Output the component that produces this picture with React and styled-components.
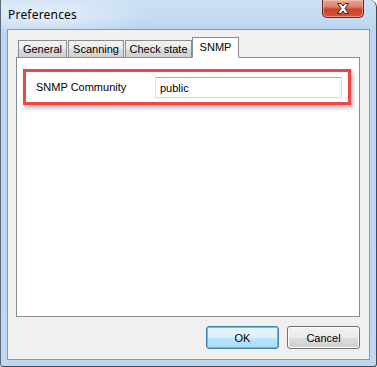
import React from "react";
import styled, { createGlobalStyle } from "styled-components";

const Global = createGlobalStyle`
  html, body { margin: 0; padding: 0; background: #fff; }
  body { font-family: "Liberation Sans", Arial, sans-serif; font-size: 11px; color: #000; }
`;

const Window = styled.div`
  position: relative;
  width: 377px;
  height: 367px;
  box-sizing: border-box;
  display: flex;
  flex-direction: column;
  background: linear-gradient(180deg, #cde1f5 0px, #bdd6f0 28px, #bfd8f2 100%);
  border-left: 1px solid #5d6b78;
  border-right: 1px solid #3d4a58;
  border-bottom: 1px solid #3d4a58;
  border-top-right-radius: 7px;
  border-bottom-left-radius: 3px;
  border-bottom-right-radius: 3px;
  overflow: hidden;
`;

const TitleBar = styled.div`
  height: 29px;
  flex: none;
  display: flex;
  align-items: flex-start;
  justify-content: space-between;
  padding-left: 7px;
  padding-right: 12px;
  box-sizing: border-box;
  background: radial-gradient(ellipse 110px 22px at 40px 15px, rgba(255,255,255,0.6), rgba(255,255,255,0) 100%);
`;

const Title = styled.span`
  font-family: "Noto Sans", "Open Sans", sans-serif;
  font-size: 12px;
  letter-spacing: 0.2px;
  line-height: 14px;
  padding-top: 8px;
  color: #000;
`;

const CloseButton = styled.div`
  width: 42px;
  height: 18px;
  box-sizing: border-box;
  border: 1px solid #6a2419;
  border-top: none;
  border-radius: 0 0 5px 5px;
  background: linear-gradient(180deg, #e9a795 0%, #dc7f68 40%, #c8452b 55%, #d4583c 100%);
  box-shadow: inset 0 0 0 1px rgba(255, 220, 210, 0.45);
  display: flex;
  align-items: center;
  justify-content: center;
`;

const Client = styled.div`
  flex: 1;
  margin: 0 6px 6px 6px;
  border: 1px solid #8a98a8;
  background: #f0f0f0;
  display: flex;
  flex-direction: column;
  padding: 7px 9px 10px 8px;
  box-sizing: border-box;
`;

const TabStrip = styled.div`
  display: flex;
  align-items: flex-end;
  height: 21px;
  padding-left: 2px;
  position: relative;
  z-index: 1;
  margin-bottom: -1px;
`;

const Tab = styled.div`
  width: ${p => p.$w}px;
  height: ${p => (p.$active ? "21px" : "18px")};
  box-sizing: border-box;
  padding-top: ${p => (p.$active ? "3px" : "2px")};
  margin-left: ${p => (p.$active ? "-1px" : "0")};
  margin-right: 1px;
  border: 1px solid #898c95;
  border-bottom: ${p => (p.$active ? "1px solid #fff" : "1px solid #898c95")};
  background: ${p => (p.$active ? "#fff" : "linear-gradient(180deg, #f2f2f2 0%, #ebebeb 50%, #dddddd 51%, #cfcfcf 100%)")};
  font-size: 11px;
  line-height: 13px;
  text-align: center;
  white-space: nowrap;
`;

const Panel = styled.div`
  height: 260px;
  box-sizing: border-box;
  border: 1px solid #898c95;
  background: #fff;
  padding: 11px 8px 0 6px;
`;

const Highlight = styled.div`
  height: 36px;
  box-sizing: border-box;
  border: 3px solid #f24545;
  display: flex;
  align-items: center;
  padding: 0 6px 0 10px;
  box-shadow: 2px 3px 4px rgba(0, 0, 0, 0.28);
`;

const Label = styled.span`
  width: 119px;
  flex: none;
  font-size: 11px;
`;

const TextBox = styled.div`
  flex: 1;
  height: 21px;
  box-sizing: border-box;
  border: 1px solid #d5dbe3;
  border-top-color: #abadb3;
  border-left-color: #e2e3ea;
  background: #fff;
  padding: 3px 4px 0;
  font-size: 11px;
  line-height: 14px;
  margin-top: 1px;
`;

const Buttons = styled.div`
  display: flex;
  justify-content: flex-end;
  gap: 8px;
  margin-top: 9px;
`;

const Button = styled.div`
  width: 73px;
  height: 23px;
  box-sizing: border-box;
  border: 1px solid ${p => (p.$default ? "#3c7fb1" : "#707070")};
  border-radius: 3px;
  background: ${p =>
    p.$default
      ? "linear-gradient(180deg, #eaf6fd 0%, #d9f0fc 50%, #bee6fd 51%, #a7d9f5 100%)"
      : "linear-gradient(180deg, #f2f2f2 0%, #ebebeb 50%, #dddddd 51%, #cfcfcf 100%)"};
  box-shadow: ${p => (p.$default ? "inset 0 0 0 1px #48c8f6" : "inset 0 0 0 1px #fcfcfc")};
  display: flex;
  align-items: center;
  justify-content: center;
  font-size: 11px;
`;

export default function App() {
  return (
    <>
      <Global />
      <Window>
        <TitleBar>
          <Title>Preferences</Title>
          <CloseButton>
            <svg width="14" height="11" viewBox="0 0 14 11">
              <path
                d="M1.5 0.5 H5 L7 3 L9 0.5 H12.5 L9 5.5 L12.5 10.5 H9 L7 8 L5 10.5 H1.5 L5 5.5 Z"
                fill="#fff"
                stroke="#4b1b12"
                strokeWidth="1"
                strokeLinejoin="round"
              />
            </svg>
          </CloseButton>
        </TitleBar>
        <Client>
          <TabStrip>
            <Tab $w={49}>General</Tab>
            <Tab $w={56}>Scanning</Tab>
            <Tab $w={67}>Check state</Tab>
            <Tab $w={47} $active>SNMP</Tab>
          </TabStrip>
          <Panel>
            <Highlight>
              <Label>SNMP Community</Label>
              <TextBox>public</TextBox>
            </Highlight>
          </Panel>
          <Buttons>
            <Button $default>OK</Button>
            <Button>Cancel</Button>
          </Buttons>
        </Client>
      </Window>
    </>
  );
}
